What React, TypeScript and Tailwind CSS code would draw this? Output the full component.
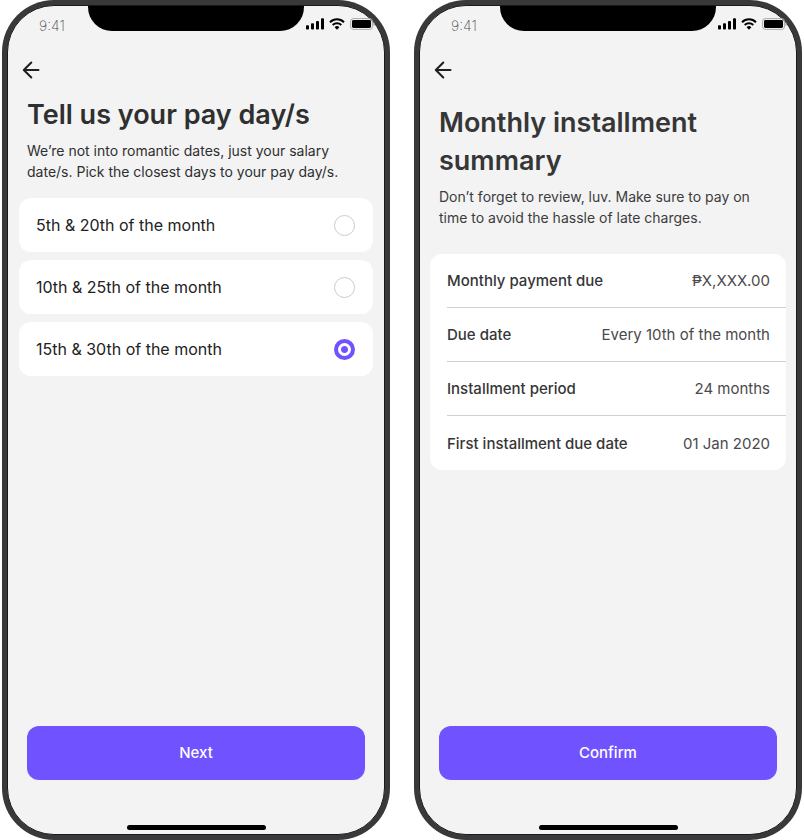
import { useState } from 'react';
import type { ReactNode } from 'react';

const PAY_DAYS = [
  { id: 'early', label: '5th & 20th of the month' },
  { id: 'mid', label: '10th & 25th of the month' },
  { id: 'late', label: '15th & 30th of the month' },
];

const SUMMARY = [
  { term: 'Monthly payment due', value: '₱X,XXX.00' },
  { term: 'Due date', value: 'Every 10th of the month' },
  { term: 'Installment period', value: '24 months' },
  { term: 'First installment due date', value: '01 Jan 2020' },
];

function SignalIcon() {
  return (
    <svg viewBox="0 0 18 12" className="h-3 w-[18px]" fill="currentColor" aria-hidden="true">
      <rect x="0" y="7.3" width="3" height="4.200" rx="0.9" />
      <rect x="5" y="5.3" width="3" height="6.200" rx="0.9" />
      <rect x="10" y="3" width="3" height="8.5" rx="0.9" />
      <rect x="15" y="0.3" width="3" height="11.2" rx="0.9" />
    </svg>
  );
}

function WifiIcon() {
  return (
    <svg viewBox="0 0 16 12" className="h-3 w-4" fill="none" stroke="currentColor" strokeWidth="2" aria-hidden="true">
      <path d="M1 4.2a10 10 0 0 1 14 0" />
      <path d="M3.7 7a6.1 6.1 0 0 1 8.6 0" />
      <path d="M8 11.7 5.6 9.2a3.5 3.5 0 0 1 4.8 0Z" fill="currentColor" stroke="none" />
    </svg>
  );
}

function BatteryIcon() {
  return (
    <svg viewBox="0 0 25 12" className="h-3 w-[25px]" aria-hidden="true">
      <rect x="0.6" y="0.6" width="21.8" height="10.8" rx="2.6" fill="none" stroke="#a9a9a9" />
      <rect x="2" y="2" width="19" height="8" rx="1.4" fill="#000" />
      <path d="M23.4 4c.9.3 1.400 1.100 1.400 2s-.5 1.700-1.400 2Z" fill="#a9a9a9" />
    </svg>
  );
}

function StatusBar() {
  return (
    <div className="relative flex h-11 items-start justify-between pr-[9px] pl-[31px]">
      <span className="pt-2 text-sm leading-6 font-extralight text-[#4a4a4a]">9:41</span>
      <div className="absolute inset-x-20 top-0 h-[25px] rounded-b-3xl bg-black" />
      <div className="flex items-center gap-[5px] pt-3 text-black">
        <SignalIcon />
        <WifiIcon />
        <BatteryIcon />
      </div>
    </div>
  );
}

interface PhoneProps {
  action: string;
  children: ReactNode;
}

function Phone({ action, children }: PhoneProps) {
  return (
    <section className="flex flex-1 rounded-[52px] bg-[#39393b] p-[5px]">
      <div className="flex flex-1 flex-col rounded-[47px] border border-[#1a1a1a] bg-[#f3f3f3]">
        <StatusBar />
        <div className="flex h-10 items-center px-[14px]">
          <button type="button" aria-label="Back" className="text-[#1f1f1f]">
            <svg
              viewBox="0 0 18 18"
              className="size-[18px]"
              fill="none"
              stroke="currentColor"
              strokeWidth="2"
              strokeLinecap="round"
              strokeLinejoin="round"
              aria-hidden="true"
            >
              <path d="M16.500 9H2M9.300 1.500 1.800 9l7.500 7.500" />
            </svg>
          </button>
        </div>
        {children}
        <div className="mt-auto px-[19px]">
          <button
            type="button"
            className="h-[54px] w-full rounded-xl bg-[#7152ff] text-[15px] font-medium text-white"
          >
            {action}
          </button>
        </div>
        <div className="mx-auto mt-[45px] mb-1 h-[5px] w-[139px] shrink-0 rounded-full bg-black" />
      </div>
    </section>
  );
}

function PayDayScreen() {
  const [selected, setSelected] = useState('late');

  return (
    <Phone action="Next">
      <header className="px-[19px] pt-[6px]">
        <h1 className="text-[27px] leading-[38px] font-semibold text-[#2f2f30]">Tell us your pay day/s</h1>
        <p className="pt-[6px] text-sm leading-[21px] text-[#2f2f30]">
          We’re not into romantic dates, just your salary date/s. Pick the closest days to your pay day/s.
        </p>
      </header>
      <div role="radiogroup" aria-label="Pay days" className="flex flex-col gap-2 px-[11px] pt-4">
        {PAY_DAYS.map((day) => (
          <label
            key={day.id}
            className="flex h-[54px] items-center justify-between rounded-xl bg-white pr-[18px] pl-[17px] text-base text-[#222]"
          >
            {day.label}
            <input
              type="radio"
              name="pay-day"
              value={day.id}
              checked={selected === day.id}
              onChange={() => setSelected(day.id)}
              className="size-[21px] appearance-none rounded-full border border-[#cbcbcb] bg-white checked:border-4 checked:border-[#7152ff] checked:bg-[radial-gradient(circle,#7152ff_3px,#fff_4px)]"
            />
          </label>
        ))}
      </div>
    </Phone>
  );
}

function SummaryScreen() {
  return (
    <Phone action="Confirm">
      <header className="px-[19px] pt-[14px]">
        <h1 className="text-[27px] leading-[38px] font-semibold text-[#363637]">Monthly installment summary</h1>
        <p className="pt-[6px] text-sm leading-[21px] text-[#3c3c3d]">
          Don’t forget to review, luv. Make sure to pay on time to avoid the hassle of late charges.
        </p>
      </header>
      <dl className="mx-[10px] mt-[26px] divide-y divide-[#d0d0d0] rounded-xl bg-white pl-[17px]">
        {SUMMARY.map((row) => (
          <div key={row.term} className="flex h-[54px] items-center justify-between pt-[2px] pr-4">
            <dt className="text-[15px] font-medium text-[#363637]">{row.term}</dt>
            <dd className="text-[15px] text-[#4a4a4b]">{row.value}</dd>
          </div>
        ))}
      </dl>
    </Phone>
  );
}

export default function App() {
  return (
    <main className="flex min-h-screen gap-6 bg-white px-[2px] font-['Inter','Liberation_Sans',sans-serif]">
      <PayDayScreen />
      <SummaryScreen />
    </main>
  );
}
